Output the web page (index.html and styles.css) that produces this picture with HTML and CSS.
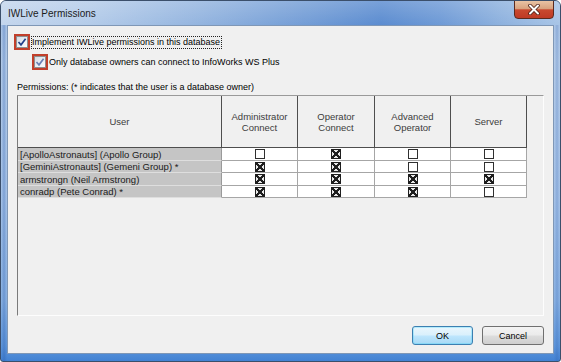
FILE: index.html
```html
<!DOCTYPE html>
<html>
<head>
<meta charset="utf-8">
<link rel="stylesheet" href="styles.css">
</head>
<body>
<div class="window">
  <div class="titlebar">
    <span class="title">IWLive Permissions</span>
    <div class="close">
      <svg width="14" height="11" viewBox="0 0 14 11">
        <path d="M3 1.5 L11 9.5 M11 1.5 L3 9.5" stroke="#4a1e14" stroke-width="3.6" stroke-linecap="round"/>
        <path d="M3 1.5 L11 9.5 M11 1.5 L3 9.5" stroke="#ffffff" stroke-width="2" stroke-linecap="round"/>
      </svg>
    </div>
  </div>
  <div class="client">
    <div class="check-row row1">
      <span class="redbox"><span class="cb">
        <svg width="10" height="10" viewBox="0 0 10 10"><path d="M1.5 5 L4 7.8 L8.6 1.8" fill="none" stroke="#22408a" stroke-width="1.7"/></svg>
      </span></span>
      <span class="label focus">Implement IWLive permissions in this database</span>
    </div>
    <div class="check-row row2">
      <span class="redbox"><span class="cb">
        <svg width="10" height="10" viewBox="0 0 10 10"><path d="M1.5 5 L4 7.8 L8.6 1.8" fill="none" stroke="#6a80b4" stroke-width="1.7"/></svg>
      </span></span>
      <span class="label">Only database owners can connect to InfoWorks WS Plus</span>
    </div>
    <div class="perm-label">Permissions: (* indicates that the user is a database owner)</div>
    <div class="grid-panel">
      <table class="grid">
        <colgroup>
          <col class="c-user"><col class="c-perm"><col class="c-perm3"><col class="c-perm"><col class="c-perm">
        </colgroup>
        <thead>
          <tr>
            <th>User</th>
            <th>Administrator<br>Connect</th>
            <th>Operator<br>Connect</th>
            <th>Advanced<br>Operator</th>
            <th>Server</th>
          </tr>
        </thead>
        <tbody>
          <tr class="tall">
            <td class="user">[ApolloAstronauts] (Apollo Group)</td>
            <td><span class="box"></span></td>
            <td><span class="box on"></span></td>
            <td><span class="box"></span></td>
            <td><span class="box"></span></td>
          </tr>
          <tr class="short">
            <td class="user">[GeminiAstronauts] (Gemeni Group) *</td>
            <td><span class="box on"></span></td>
            <td><span class="box on"></span></td>
            <td><span class="box"></span></td>
            <td><span class="box"></span></td>
          </tr>
          <tr class="tall">
            <td class="user">armstrongn (Neil Armstrong)</td>
            <td><span class="box on"></span></td>
            <td><span class="box on"></span></td>
            <td><span class="box on"></span></td>
            <td><span class="box on"></span></td>
          </tr>
          <tr class="short">
            <td class="user">conradp (Pete Conrad) *</td>
            <td><span class="box on"></span></td>
            <td><span class="box on"></span></td>
            <td><span class="box on"></span></td>
            <td><span class="box"></span></td>
          </tr>
        </tbody>
      </table>
    </div>
    <div class="buttons">
      <button class="btn default">OK</button>
      <button class="btn">Cancel</button>
    </div>
  </div>
</div>
</body>
</html>
```
FILE: styles.css
```css
html, body {
  margin: 0;
  padding: 0;
}
body {
  width: 561px;
  height: 362px;
  overflow: hidden;
  background: #ffffff;
  font-family: "Liberation Sans", Arial, sans-serif;
}
.window {
  box-sizing: border-box;
  width: 561px;
  height: 362px;
  border: 1px solid #3b4f6b;
  border-radius: 6px 6px 3px 3px;
  overflow: hidden;
  background:
    linear-gradient(90deg, rgba(40,90,170,0.0) 0, rgba(40,90,170,0.35) 3px, rgba(40,90,170,0) 6px, rgba(0,0,0,0) 553px, rgba(40,90,170,0.25) 556px, rgba(0,0,0,0) 559px),
    linear-gradient(180deg, #a9c3e6 0px, #b9cfea 60px, #a9c5e9 200px, #8db4e4 300px, #5f97dc 345px, #3f7fd2 362px);
  display: flex;
  flex-direction: column;
  padding: 0 6px 7px;
}
.titlebar {
  height: 24px;
  margin: 0 -6px;
  padding-left: 7px;
  display: flex;
  align-items: flex-start;
  background:
    linear-gradient(180deg, rgba(255,255,255,0.18) 0, rgba(255,255,255,0) 24px),
    linear-gradient(90deg, #c4d6ed 0, #b3cbe9 90px, #93b4df 200px, #7aa2d8 280px, #5b8cd0 380px, #6e9ad6 440px, #8db1de 500px, #a9c5e7 561px);
}
.title {
  padding-top: 7px;
  font-size: 10px;
  line-height: 12px;
  color: #1b1b1b;
  flex: 1;
}
.close {
  width: 40px;
  height: 19px;
  box-sizing: border-box;
  margin-top: -1px;
  margin-right: 6px;
  border: 1px solid #5b2a1f;
  border-radius: 0 0 4px 4px;
  background: linear-gradient(180deg, #e9c3a4 0, #d8a27f 45%, #c9492f 52%, #bf3a25 100%);
  display: flex;
  align-items: center;
  justify-content: center;
}
.client {
  flex: 1;
  border: 1px solid #7f97b6;
  background: #f0f0f0;
  padding: 8px 9px 0 6px;
  display: flex;
  flex-direction: column;
  font-size: 9px;
  color: #000;
}
.check-row {
  display: flex;
  align-items: center;
  height: 16px;
}
.row2 {
  margin-top: 4px;
  margin-left: 18px;
}
.redbox {
  box-sizing: border-box;
  width: 16px;
  height: 16px;
  border: 2px solid #c13f2b;
  flex: none;
}
.cb {
  box-sizing: border-box;
  display: flex;
  align-items: center;
  justify-content: center;
  width: 12px;
  height: 12px;
  border: 1px solid #8e8f8f;
  background: linear-gradient(135deg, #d4dbe4 0, #eef1f5 60%, #fbfbfb 100%);
}
.label {
  font-size: 9px;
  line-height: 11px;
  white-space: nowrap;
}
.row1 .label {
  margin-left: 1px;
}
.row2 .label {
  margin-left: 1px;
}
.focus {
  border: 1px dotted #222;
  padding: 0 1px 0 0;
}
.perm-label {
  margin-top: 12px;
  margin-left: 3px;
  font-size: 9px;
  line-height: 11px;
  white-space: nowrap;
}
.grid-panel {
  box-sizing: border-box;
  margin-top: 2px;
  margin-left: 3px;
  width: 527px;
  height: 221px;
  border-top: 1px solid #9a9a9a;
  border-left: 1px solid #7a7a7a;
  border-right: 1px solid #fdfdfd;
  border-bottom: 1px solid #fdfdfd;
  background: #f0f0f0;
}
.grid {
  border-collapse: separate;
  border-spacing: 0;
  table-layout: fixed;
  width: 509px;
  font-size: 9.5px;
}
.c-user { width: 204px; }
.c-perm { width: 76px; }
.c-perm3 { width: 77px; }
.grid th {
  height: 51px;
  padding: 0;
  font-weight: normal;
  color: #3c3c3c;
  line-height: 11px;
  text-align: center;
  vertical-align: middle;
  background: #f0f0f0;
  border-right: 1px solid #4e4e4e;
  border-bottom: 1px solid #4e4e4e;
}
.grid td {
  padding: 0;
  line-height: 11px;
  background: #ffffff;
  border-right: 1px solid #a6a6a6;
  border-bottom: 1px solid #a6a6a6;
  text-align: center;
  vertical-align: middle;
}
.grid tr.tall td { height: 12px; }
.grid tr.short td { height: 11px; }
.grid td.user {
  text-align: left;
  padding-left: 2px;
  background: #c5c5c5;
  color: #1a1a1a;
  border-bottom-color: #dedede;
  border-right-color: #9a9a9a;
  white-space: nowrap;
}
.box {
  display: block;
  box-sizing: border-box;
  width: 10px;
  height: 10px;
  margin: 0 auto;
  border: 1px solid #303030;
  background: #ffffff;
}
.box.on {
  background:
    linear-gradient(45deg, transparent 42%, #1e1e1e 42%, #1e1e1e 58%, transparent 58%),
    linear-gradient(-45deg, transparent 42%, #1e1e1e 42%, #1e1e1e 58%, transparent 58%),
    #e8e8e8;
  border-color: #1e1e1e;
}
.buttons {
  margin-top: 10px;
  display: flex;
  justify-content: flex-end;
  gap: 9px;
}
.btn {
  box-sizing: border-box;
  height: 19px;
  width: 61px;
  padding: 0;
  font-family: "Liberation Sans", Arial, sans-serif;
  font-size: 9px;
  color: #000;
  border: 1px solid #707070;
  border-radius: 3px;
  background: linear-gradient(180deg, #f3f3f3 0, #ebebeb 48%, #dddddd 52%, #cfcfcf 100%);
}
.btn.default {
  border-color: #3c7fb1;
  background: linear-gradient(180deg, #eaf6fd 0, #d9f0fc 48%, #bee6fd 52%, #a7d9f5 100%);
  box-shadow: inset 0 0 0 1px #48d5fa55;
}
.btn + .btn {
  width: 62px;
}
```
